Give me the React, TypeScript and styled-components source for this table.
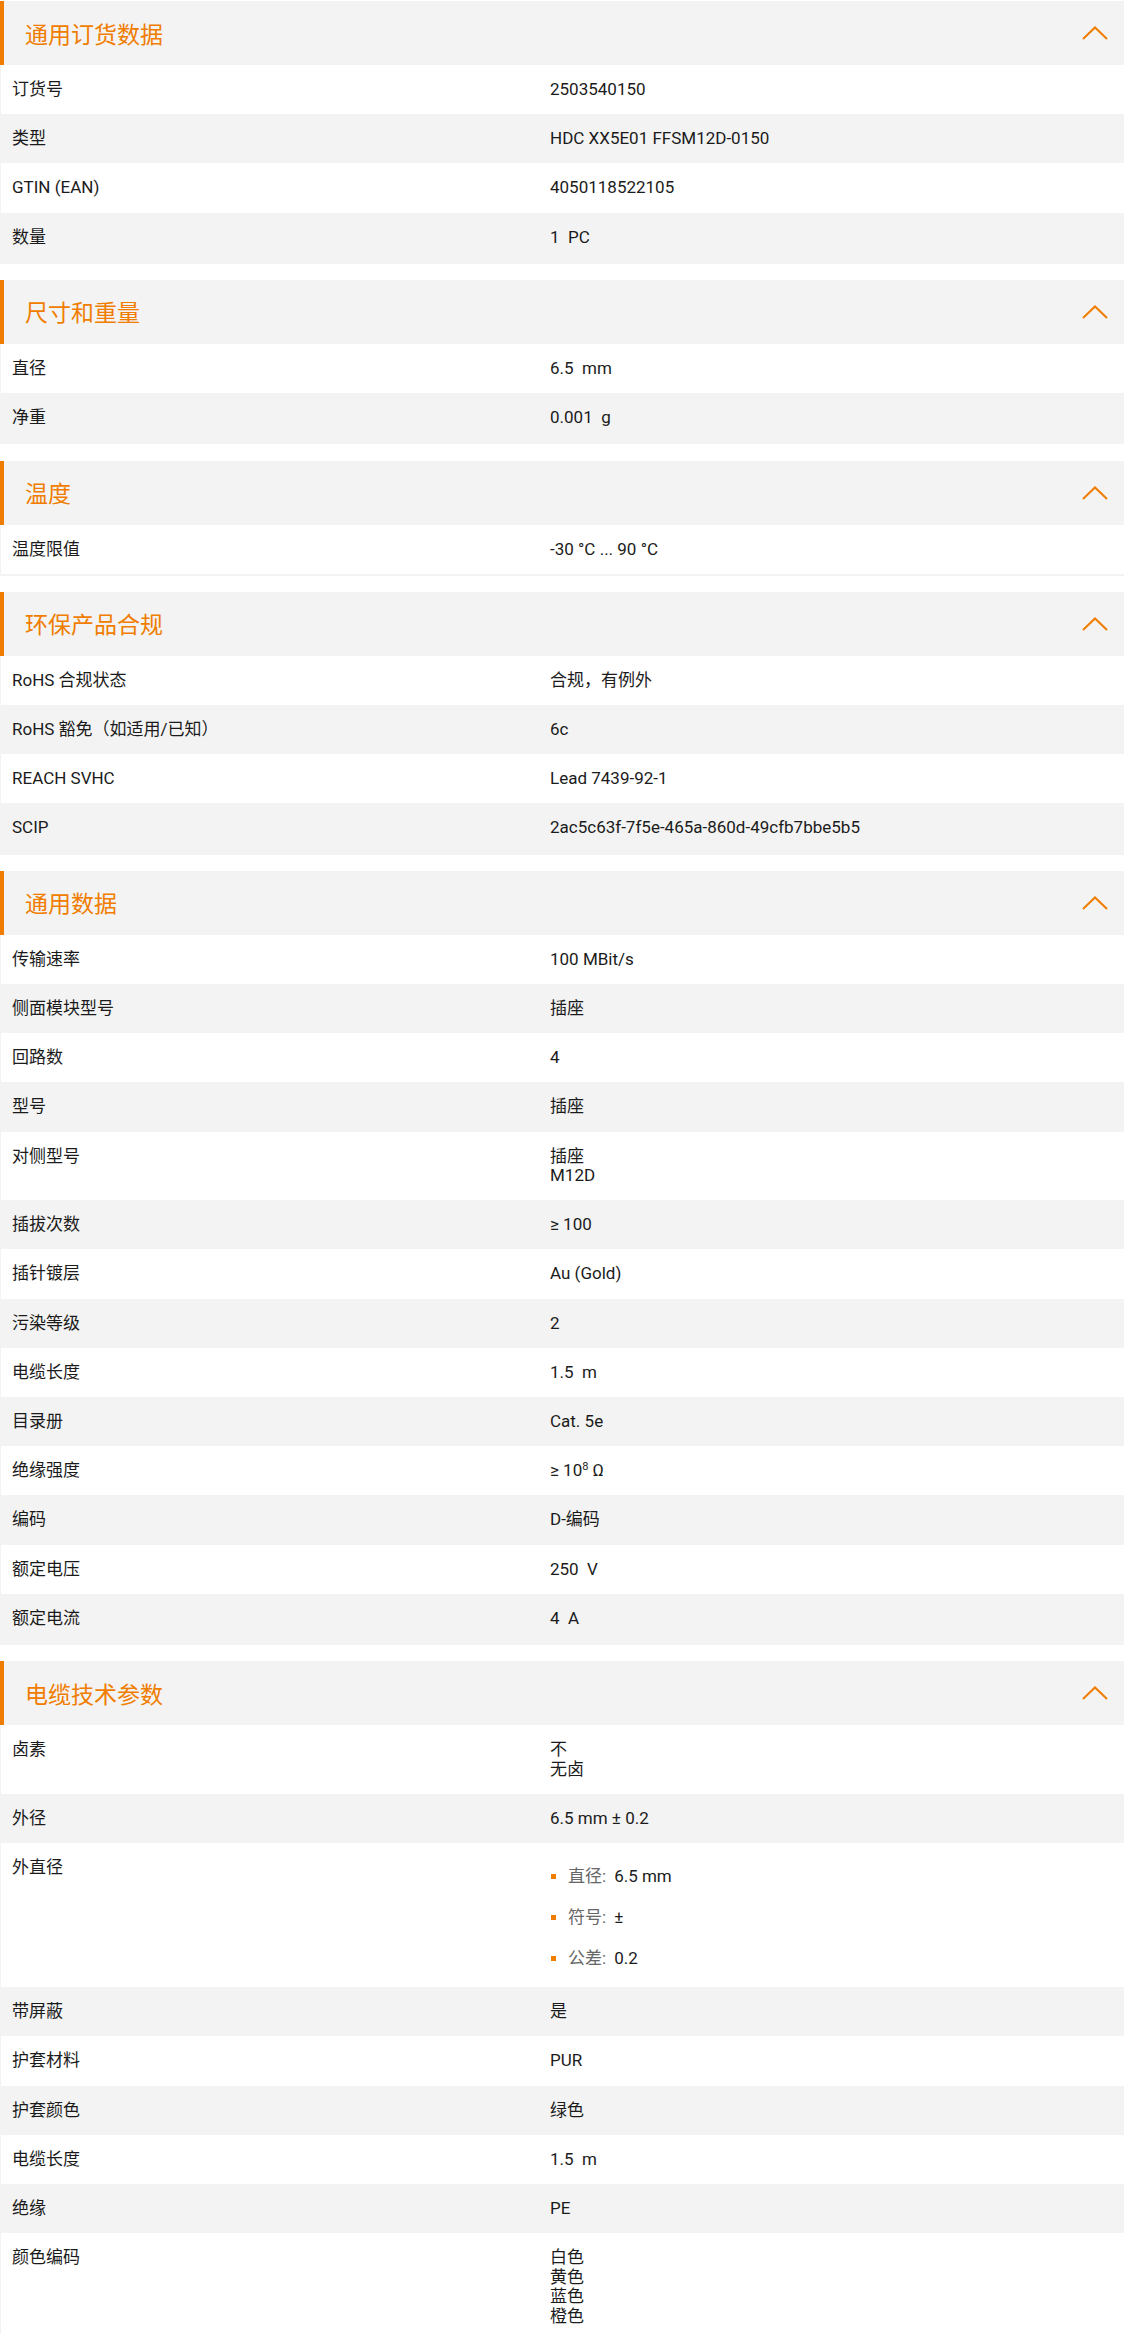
import React from "react";
import styled, { createGlobalStyle } from "styled-components";

const GlobalStyle = createGlobalStyle`
  html, body {
    margin: 0;
    padding: 0;
    background: #ffffff;
  }
  body {
    font-family: Roboto, "Noto Sans CJK SC", sans-serif;
    color: #1b1b1b;
    -webkit-font-smoothing: antialiased;
  }
`;

const ORANGE = "#f07d00";
const GRAY = "#f3f3f3";

const Page = styled.div`
  padding-top: 1px;
  width: 1124px;
`;

const Section = styled.section`
  margin-bottom: 16.2px;
`;

const Header = styled.div`
  display: flex;
  align-items: center;
  justify-content: space-between;
  height: 64px;
  box-sizing: border-box;
  background: ${GRAY};
  border-left: 4px solid ${ORANGE};
  padding: 0 16px 0 21px;
`;

const Title = styled.h2`
  margin: 0;
  font-family: "Noto Sans CJK SC", Roboto, sans-serif;
  font-size: 23px;
  font-weight: 400;
  line-height: 1;
  color: ${ORANGE};
`;

const Chevron = styled.svg`
  display: block;
  width: 26px;
  height: 14px;
`;

const Table = styled.div`
  border-left: 1px solid ${GRAY};
  border-bottom: 2px solid ${GRAY};
`;

const Row = styled.div<{ $alt: boolean }>`
  display: grid;
  grid-template-columns: 538px 1fr;
  align-items: start;
  padding: 15px 0 14.7px;
  background: ${(p) => (p.$alt ? GRAY : "#ffffff")};
  font-size: 17px;
  line-height: 19.5px;
`;

const Label = styled.div`
  padding-left: 11px;
`;

const Value = styled.div`
  padding-left: 11px;
  white-space: pre-wrap;
`;

const Line = styled.div`
  line-height: 19.5px;
`;

const Sup = styled.sup`
  font-size: 11px;
  line-height: 0;
  vertical-align: 6px;
`;

const BulletList = styled.ul`
  list-style: none;
  margin: 9px 0 4px;
  padding: 0;
`;

const BulletItem = styled.li`
  position: relative;
  padding-left: 18px;
  line-height: 19.5px;
  & + & {
    margin-top: 21.5px;
  }
  &::before {
    content: "";
    position: absolute;
    left: 1px;
    top: 7px;
    width: 5px;
    height: 5px;
    background: ${ORANGE};
  }
`;

const BulletKey = styled.span`
  color: #666666;
  margin-right: 8px;
`;

type Cell = string | string[] | React.ReactNode;

interface SectionData {
  title: string;
  rows: [string, Cell][];
}

const bullets = (
  <BulletList>
    <BulletItem>
      <BulletKey>直径:</BulletKey>6.5 mm
    </BulletItem>
    <BulletItem>
      <BulletKey>符号:</BulletKey>±
    </BulletItem>
    <BulletItem>
      <BulletKey>公差:</BulletKey>0.2
    </BulletItem>
  </BulletList>
);

const sections: SectionData[] = [
  {
    title: "通用订货数据",
    rows: [
      ["订货号", "2503540150"],
      ["类型", "HDC XX5E01 FFSM12D-0150"],
      ["GTIN (EAN)", "4050118522105"],
      ["数量", "1  PC"],
    ],
  },
  {
    title: "尺寸和重量",
    rows: [
      ["直径", "6.5  mm"],
      ["净重", "0.001  g"],
    ],
  },
  {
    title: "温度",
    rows: [["温度限值", "-30 °C ... 90 °C"]],
  },
  {
    title: "环保产品合规",
    rows: [
      ["RoHS 合规状态", "合规，有例外"],
      ["RoHS 豁免（如适用/已知）", "6c"],
      ["REACH SVHC", "Lead 7439-92-1"],
      ["SCIP", "2ac5c63f-7f5e-465a-860d-49cfb7bbe5b5"],
    ],
  },
  {
    title: "通用数据",
    rows: [
      ["传输速率", "100 MBit/s"],
      ["侧面模块型号", "插座"],
      ["回路数", "4"],
      ["型号", "插座"],
      ["对侧型号", ["插座", "M12D"]],
      ["插拔次数", "≥ 100"],
      ["插针镀层", "Au (Gold)"],
      ["污染等级", "2"],
      ["电缆长度", "1.5  m"],
      ["目录册", "Cat. 5e"],
      [
        "绝缘强度",
        <>
          ≥ 10<Sup>8</Sup> Ω
        </>,
      ],
      ["编码", "D-编码"],
      ["额定电压", "250  V"],
      ["额定电流", "4  A"],
    ],
  },
  {
    title: "电缆技术参数",
    rows: [
      ["卤素", ["不", "无卤"]],
      ["外径", "6.5 mm ± 0.2"],
      ["外直径", bullets],
      ["带屏蔽", "是"],
      ["护套材料", "PUR"],
      ["护套颜色", "绿色"],
      ["电缆长度", "1.5  m"],
      ["绝缘", "PE"],
      ["颜色编码", ["白色", "黄色", "蓝色", "橙色"]],
    ],
  },
];

const renderValue = (v: Cell) => {
  if (Array.isArray(v)) {
    return (v as string[]).map((line, i) => <Line key={i}>{line}</Line>);
  }
  return v;
};

export default function App() {
  return (
    <>
      <GlobalStyle />
      <Page>
        {sections.map((s) => (
          <Section key={s.title}>
            <Header>
              <Title>{s.title}</Title>
              <Chevron viewBox="0 0 26 14" aria-hidden="true">
                <polyline
                  points="1,13 13,1.5 25,13"
                  fill="none"
                  stroke={ORANGE}
                  strokeWidth="2"
                />
              </Chevron>
            </Header>
            <Table>
              {s.rows.map(([label, value], i) => (
                <Row key={label + i} $alt={i % 2 === 1}>
                  <Label>{label}</Label>
                  <Value>{renderValue(value)}</Value>
                </Row>
              ))}
            </Table>
          </Section>
        ))}
      </Page>
    </>
  );
}
